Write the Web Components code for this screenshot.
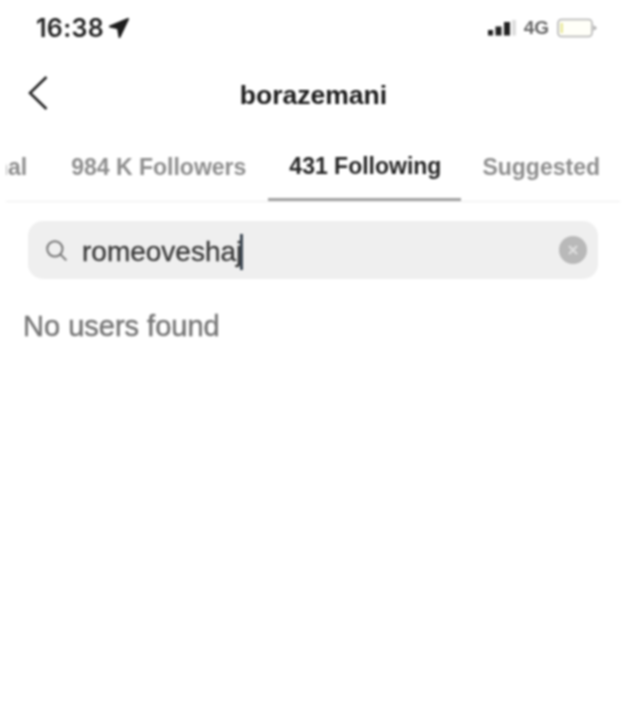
<!DOCTYPE html>
<html><head><meta charset="utf-8"><style>
html,body{margin:0;background:#fff}
body{width:640px;height:714px;overflow:hidden;font-family:"Liberation Sans",Arial,sans-serif;}
</style></head><body>
<app-screen>
<status-bar></status-bar>
<nav-header title="borazemani"></nav-header>
<tab-row></tab-row>
<search-box value="romeoveshaj"></search-box>
<empty-note>No users found</empty-note>
</app-screen>
<script>
function def(name,html,init){customElements.define(name,class extends HTMLElement{constructor(){super();this.attachShadow({mode:'open'}).innerHTML=html;}connectedCallback(){init&&init(this)}})}
def('app-screen',`<style>:host{display:flex;flex-direction:column;width:640px;height:714px;background:#fff;filter:blur(.8px)}</style><slot></slot>`);
def('status-bar',`<style>
:host{display:flex;align-items:center;justify-content:space-between;height:56px;padding:0 42px 0 36px;box-sizing:border-box;color:#222}
.t{display:flex;align-items:center;gap:5px;font-size:25px;font-family:Inter,"Liberation Sans",sans-serif;font-weight:600;letter-spacing:.3px}
.r{display:flex;align-items:center;gap:8px;font-size:19px;color:#666;font-weight:bold}
svg{display:block}
</style>
<div class="t"><span>16:38</span><svg width="20" height="20" viewBox="0 0 20 20"><path d="M19 1 1 8.500l8 1.800 1.500 8.700z" fill="#1c1c1c" stroke="#1c1c1c" stroke-width="2" stroke-linejoin="round"/></svg></div>
<div class="r"><svg width="28" height="16" viewBox="0 0 28 16"><rect x="0" y="10" width="5" height="5.500" fill="#222"/><rect x="7.500" y="6.500" width="6" height="9" fill="#222"/><rect x="16" y="2" width="6" height="13.500" fill="#222"/><rect x="24" y="0" width="4" height="15.500" fill="#ddd"/></svg><span>4G</span>
<svg width="41" height="20" viewBox="0 0 41 20"><rect x="1" y="1.500" width="34" height="17" rx="3.500" fill="#fffff8" stroke="#b0b0b0" stroke-width="1.500"/><rect x="3.500" y="5" width="2.500" height="10" fill="#e8e89a"/><path d="M36.500 7l3.500 3-3.500 3z" fill="#aaa"/></svg></div>`);
def('nav-header',`<style>
:host{display:flex;align-items:center;justify-content:center;position:relative;height:78px;color:#1c1c1c}
b{font-size:26.500px;font-weight:bold;margin-right:13px}
svg{position:absolute;left:28px;top:19px}
</style><svg width="22" height="36" viewBox="0 0 22 36"><path d="M18.500 2 2 18l16.500 16" fill="none" stroke="#222" stroke-width="2.600"/></svg><b></b>`,el=>{el.shadowRoot.querySelector('b').textContent=el.getAttribute('title')});
def('tab-row',`<style>
:host{display:flex;justify-content:flex-end;overflow:hidden;margin:0 20px 0 6px;height:68px;border-bottom:1px solid #ececec;box-sizing:border-box;font-size:23px;font-weight:bold;color:#8e8e8e;white-space:nowrap}
span{flex:none;padding:1px 20px 0 21px;display:flex;align-items:center;height:66px;box-sizing:border-box;margin-bottom:-1px}
.p{padding-right:23px}
.f{padding-right:22px}
.on{color:#262626;height:67px;border-bottom:3px solid #a2a2a2}
</style><span class="p">Personal</span><span class="f">984 K Followers</span><span class="on">431 Following</span><span>Suggested</span>`);
def('search-box',`<style>
:host{display:flex;align-items:center;height:58px;margin:19px 42px 0 28px;padding:0 11px 0 17px;border-radius:15px;background:#efefef;box-sizing:border-box;font-size:28px;color:#3a3a3a}
.v{margin-left:14px;padding-top:3px;-webkit-text-stroke:.3px #3a3a3a}
.c{display:inline-block;width:2.500px;height:36px;background:#3f4a55;vertical-align:-9px;margin-left:-2px}
.x{margin-left:auto}
svg{display:block;flex:none}
</style><svg width="23" height="23" viewBox="0 0 21 21"><circle cx="9" cy="9" r="7" fill="none" stroke="#777" stroke-width="1.800"/><path d="M14 14l5.500 5.500" stroke="#777" stroke-width="1.800"/></svg><span class="v"></span><svg class="x" width="28" height="28" viewBox="0 0 28 28"><circle cx="14" cy="14" r="14" fill="#b9b9b9"/><path d="M10 10l8 8M18 10l-8 8" stroke="#dedede" stroke-width="2.400"/></svg>`,el=>{el.shadowRoot.querySelector('.v').innerHTML=el.getAttribute('value')+'<i class="c"></i>'});
def('empty-note',`<style>:host{display:block;margin:31px 0 0 23px;font-size:29px;color:#777;font-weight:normal;-webkit-text-stroke:.5px #777}</style><slot></slot>`);
</script>
</body></html>
